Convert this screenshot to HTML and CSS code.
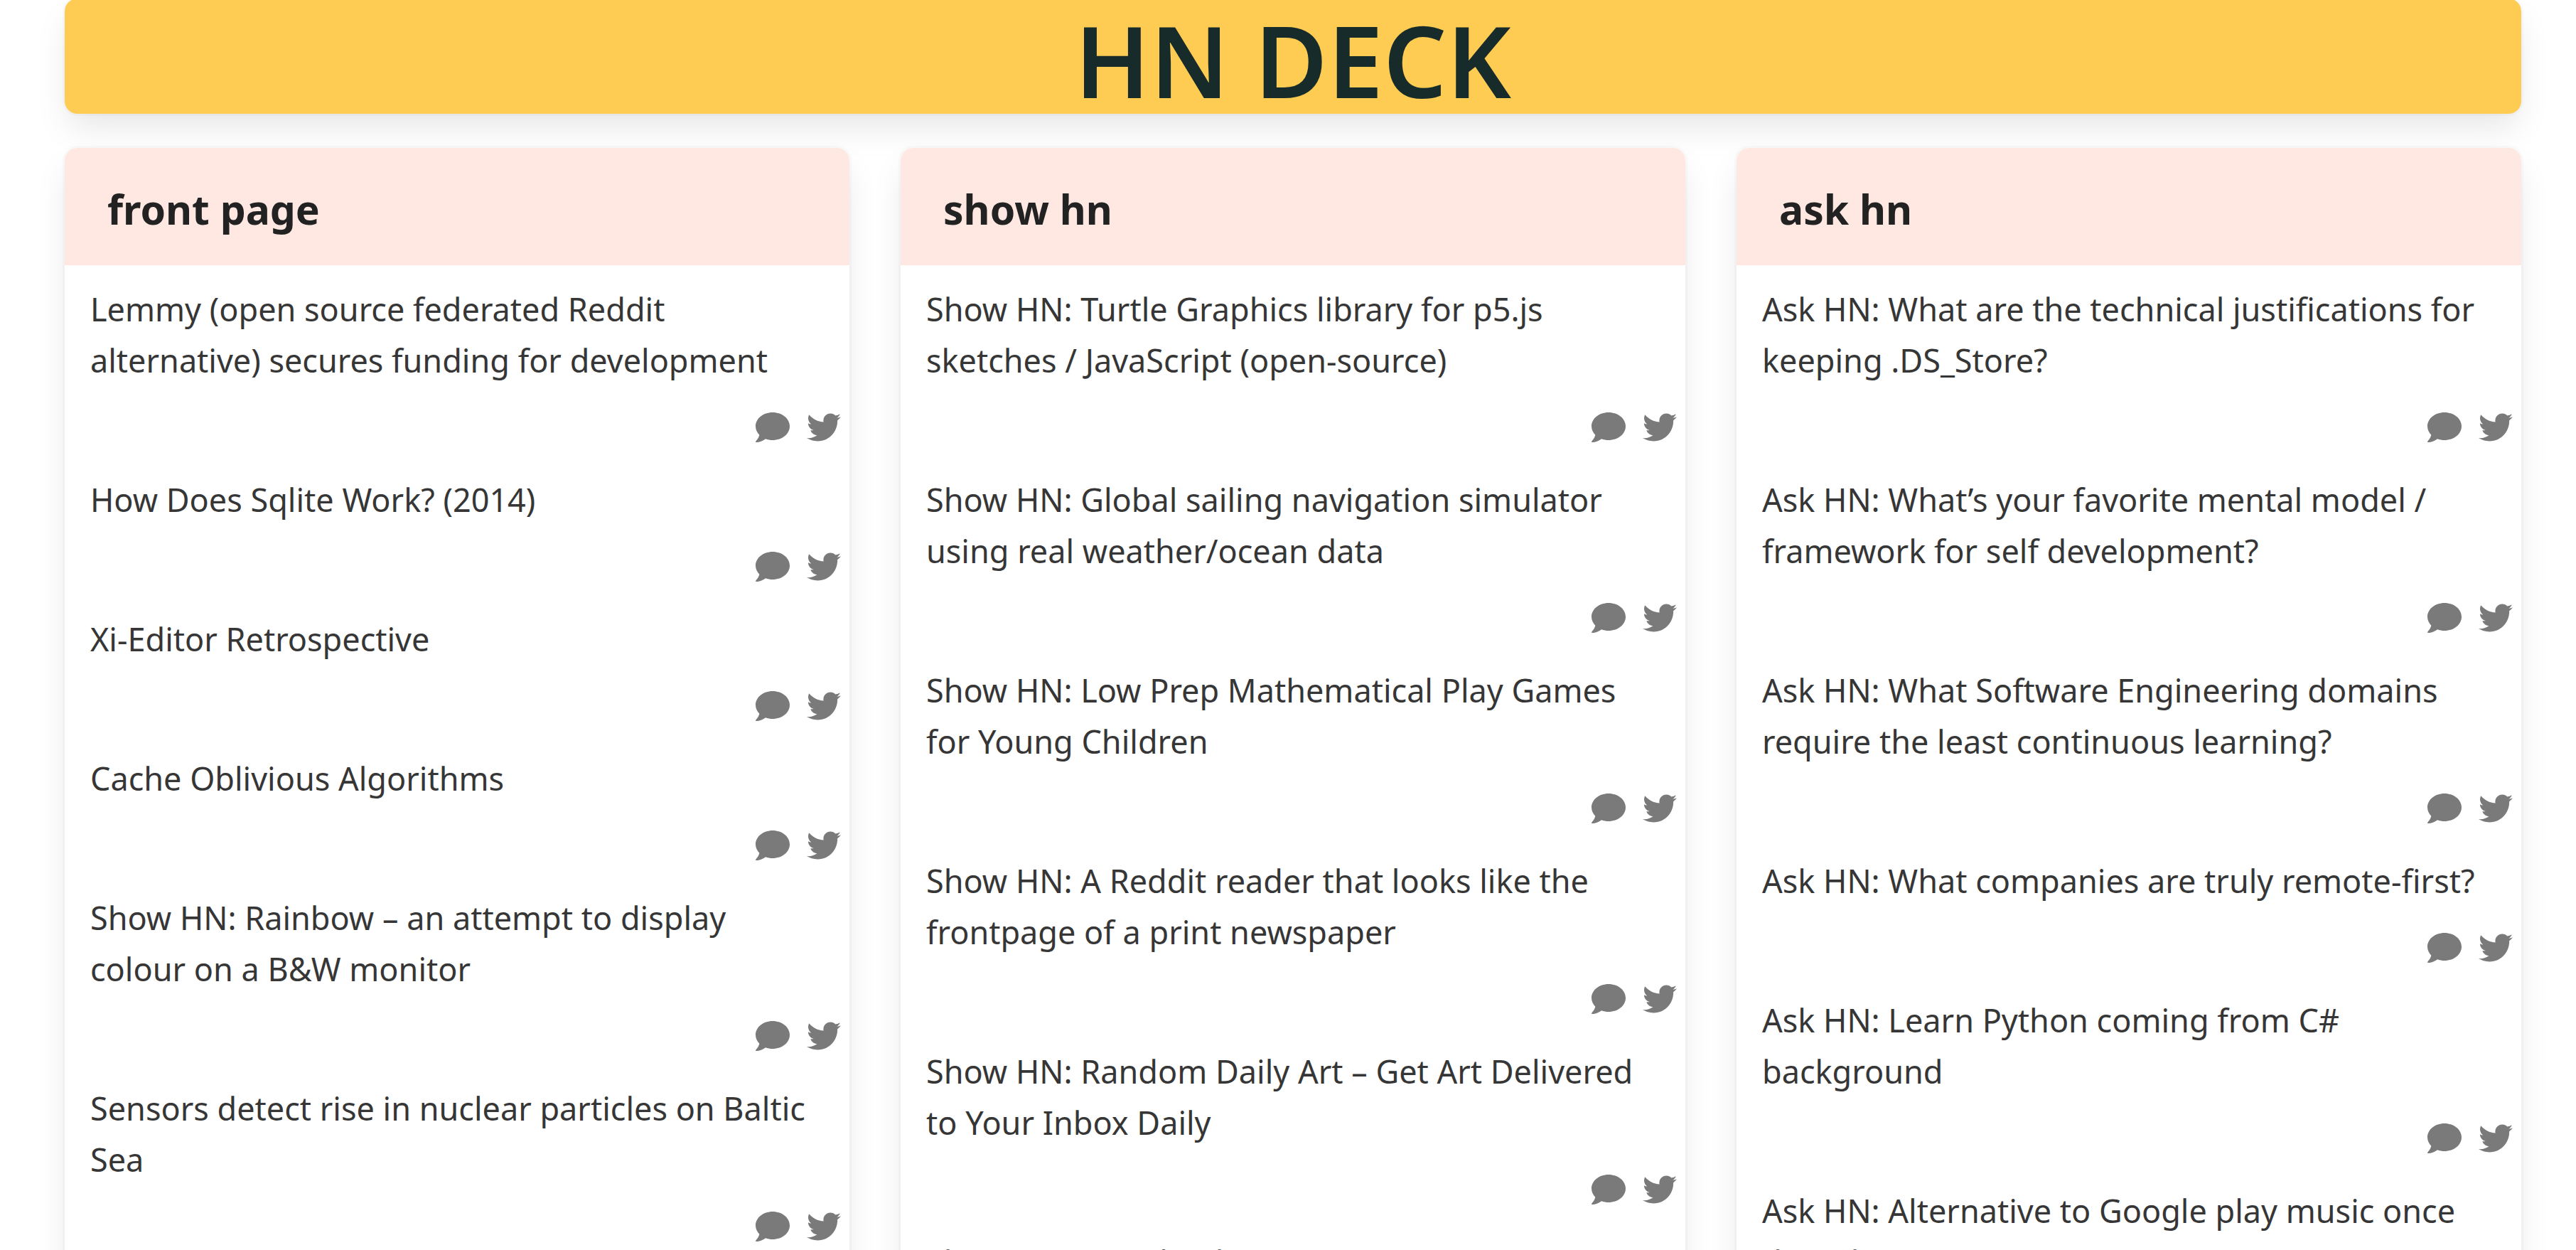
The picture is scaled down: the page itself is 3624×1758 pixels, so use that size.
FILE: index.html
```html
<!DOCTYPE html>
<html lang="en">
<head>
<meta charset="utf-8">
<title>HN Deck</title>
<link rel="stylesheet" href="styles.css">
</head>
<body>
<svg class="sprite" aria-hidden="true">
  <symbol id="comment" viewBox="0 0 512 512"><path d="M256 32C114.600 32 0 125.100 0 240c0 49.600 21.400 95 57 130.700C44.500 421.100 2.700 466 2.200 466.500c-2.200 2.300-2.800 5.700-1.500 8.700S4.800 480 8 480c66.300 0 116-31.800 140.600-51.400 32.700 12.300 69 19.400 107.400 19.400 141.400 0 256-93.100 256-208S397.400 32 256 32z"/></symbol>
  <symbol id="twitter" viewBox="0 0 512 512"><path d="M459.370 151.716c.325 4.548.325 9.097.325 13.645 0 138.720-105.583 298.558-298.558 298.558-59.452 0-114.680-17.219-161.137-47.106 8.447.974 16.568 1.299 25.340 1.299 49.055 0 94.213-16.568 130.274-44.832-46.132-.975-84.792-31.188-98.112-72.772 6.498.974 12.995 1.624 19.818 1.624 9.421 0 18.843-1.300 27.614-3.573-48.081-9.747-84.143-51.980-84.143-102.985v-1.299c13.969 7.797 30.214 12.670 47.431 13.319-28.264-18.843-46.781-51.005-46.781-87.391 0-19.492 5.197-37.360 14.294-52.954 51.655 63.675 129.300 105.258 216.365 109.807-1.624-7.797-2.599-15.918-2.599-24.040 0-57.828 46.782-104.934 104.934-104.934 30.213 0 57.502 12.670 76.670 33.137 23.715-4.548 46.456-13.320 66.599-25.340-7.798 24.366-24.366 44.833-46.132 57.827 21.117-2.273 41.584-8.122 60.426-16.243-14.292 20.791-32.161 39.308-52.628 54.253z"/></symbol>
</svg>
<div class="page">
  <header class="banner"><h1 class="title">HN DECK</h1></header>
  <main class="deck">
    <section class="card">
      <h2 class="card-title">front page</h2>
      <ul class="stories">
        <li><a class="story" href="#">Lemmy (open source federated Reddit alternative) secures funding for development</a><div class="actions"><a href="#" aria-label="Comments"><svg class="icon"><use href="#comment"/></svg></a><a href="#" aria-label="Tweet"><svg class="icon"><use href="#twitter"/></svg></a></div></li>
        <li><a class="story" href="#">How Does Sqlite Work? (2014)</a><div class="actions"><a href="#" aria-label="Comments"><svg class="icon"><use href="#comment"/></svg></a><a href="#" aria-label="Tweet"><svg class="icon"><use href="#twitter"/></svg></a></div></li>
        <li><a class="story" href="#">Xi-Editor Retrospective</a><div class="actions"><a href="#" aria-label="Comments"><svg class="icon"><use href="#comment"/></svg></a><a href="#" aria-label="Tweet"><svg class="icon"><use href="#twitter"/></svg></a></div></li>
        <li><a class="story" href="#">Cache Oblivious Algorithms</a><div class="actions"><a href="#" aria-label="Comments"><svg class="icon"><use href="#comment"/></svg></a><a href="#" aria-label="Tweet"><svg class="icon"><use href="#twitter"/></svg></a></div></li>
        <li><a class="story" href="#">Show HN: Rainbow – an attempt to display colour on a B&amp;W monitor</a><div class="actions"><a href="#" aria-label="Comments"><svg class="icon"><use href="#comment"/></svg></a><a href="#" aria-label="Tweet"><svg class="icon"><use href="#twitter"/></svg></a></div></li>
        <li><a class="story" href="#">Sensors detect rise in nuclear particles on Baltic Sea</a><div class="actions"><a href="#" aria-label="Comments"><svg class="icon"><use href="#comment"/></svg></a><a href="#" aria-label="Tweet"><svg class="icon"><use href="#twitter"/></svg></a></div></li>
      </ul>
    </section>
    <section class="card">
      <h2 class="card-title">show hn</h2>
      <ul class="stories">
        <li><a class="story" href="#">Show HN: Turtle Graphics library for p5.js sketches / JavaScript (open-source)</a><div class="actions"><a href="#" aria-label="Comments"><svg class="icon"><use href="#comment"/></svg></a><a href="#" aria-label="Tweet"><svg class="icon"><use href="#twitter"/></svg></a></div></li>
        <li><a class="story" href="#">Show HN: Global sailing navigation simulator using real weather/ocean data</a><div class="actions"><a href="#" aria-label="Comments"><svg class="icon"><use href="#comment"/></svg></a><a href="#" aria-label="Tweet"><svg class="icon"><use href="#twitter"/></svg></a></div></li>
        <li><a class="story" href="#">Show HN: Low Prep Mathematical Play Games for Young Children</a><div class="actions"><a href="#" aria-label="Comments"><svg class="icon"><use href="#comment"/></svg></a><a href="#" aria-label="Tweet"><svg class="icon"><use href="#twitter"/></svg></a></div></li>
        <li><a class="story" href="#">Show HN: A Reddit reader that looks like the frontpage of a print newspaper</a><div class="actions"><a href="#" aria-label="Comments"><svg class="icon"><use href="#comment"/></svg></a><a href="#" aria-label="Tweet"><svg class="icon"><use href="#twitter"/></svg></a></div></li>
        <li><a class="story" href="#">Show HN: Random Daily Art – Get Art Delivered to Your Inbox Daily</a><div class="actions"><a href="#" aria-label="Comments"><svg class="icon"><use href="#comment"/></svg></a><a href="#" aria-label="Tweet"><svg class="icon"><use href="#twitter"/></svg></a></div></li>
        <li><a class="story" href="#">Show HN: A tool to browse</a><div class="actions"><a href="#" aria-label="Comments"><svg class="icon"><use href="#comment"/></svg></a><a href="#" aria-label="Tweet"><svg class="icon"><use href="#twitter"/></svg></a></div></li>
      </ul>
    </section>
    <section class="card">
      <h2 class="card-title">ask hn</h2>
      <ul class="stories">
        <li><a class="story" href="#">Ask HN: What are the technical justifications for keeping .DS_Store?</a><div class="actions"><a href="#" aria-label="Comments"><svg class="icon"><use href="#comment"/></svg></a><a href="#" aria-label="Tweet"><svg class="icon"><use href="#twitter"/></svg></a></div></li>
        <li><a class="story" href="#">Ask HN: What’s your favorite mental model / framework for self development?</a><div class="actions"><a href="#" aria-label="Comments"><svg class="icon"><use href="#comment"/></svg></a><a href="#" aria-label="Tweet"><svg class="icon"><use href="#twitter"/></svg></a></div></li>
        <li><a class="story" href="#">Ask HN: What Software Engineering domains require the least continuous learning?</a><div class="actions"><a href="#" aria-label="Comments"><svg class="icon"><use href="#comment"/></svg></a><a href="#" aria-label="Tweet"><svg class="icon"><use href="#twitter"/></svg></a></div></li>
        <li><a class="story" href="#">Ask HN: What companies are truly remote-first?</a><div class="actions"><a href="#" aria-label="Comments"><svg class="icon"><use href="#comment"/></svg></a><a href="#" aria-label="Tweet"><svg class="icon"><use href="#twitter"/></svg></a></div></li>
        <li><a class="story" href="#">Ask HN: Learn Python coming from C# background</a><div class="actions"><a href="#" aria-label="Comments"><svg class="icon"><use href="#comment"/></svg></a><a href="#" aria-label="Tweet"><svg class="icon"><use href="#twitter"/></svg></a></div></li>
        <li><a class="story" href="#">Ask HN: Alternative to Google play music once they shut?</a><div class="actions"><a href="#" aria-label="Comments"><svg class="icon"><use href="#comment"/></svg></a><a href="#" aria-label="Tweet"><svg class="icon"><use href="#twitter"/></svg></a></div></li>
      </ul>
    </section>
  </main>
</div>
</body>
</html>
```
FILE: styles.css
```css
* { box-sizing: border-box; margin: 0; padding: 0; }
html { background: #fff; }
body { font-family: "Segoe UI", "Noto Sans", sans-serif; font-size: 45px; line-height: 72px; color: #363636; }
.sprite { display: none; }
.page { display: flex; flex-direction: column; gap: 48px; margin-top: -2px; padding: 0 77px 0 91px; }
.banner, .card {
  border-radius: 18px;
  box-shadow: 0 24px 48px -6px rgba(10, 10, 10, .1), 0 0 0 3px rgba(10, 10, 10, .02);
}
.banner { padding-top: 10px; background: #ffcc53; }
.title { font-size: 140px; line-height: 152px; font-weight: 600; color: #172b2a; text-align: center; }
.deck { display: grid; grid-template-columns: repeat(3, minmax(0, 1fr)); gap: 72px; }
.card { background: #fff; overflow: hidden; }
.card-title { padding: 40px 60px 32px; background: #ffe8e1; color: #222; font-size: 57px; line-height: 93px; font-weight: 700; }
.stories { list-style: none; padding-top: 26px; }
.story { display: block; padding: 0 36px; color: #363636; text-decoration: none; }
.actions { display: flex; justify-content: flex-end; gap: 24px; padding: 34px 12px 42px; }
.actions a { display: block; color: #7a7a7a; }
.icon { display: block; width: 48px; height: 48px; fill: currentColor; }
```
